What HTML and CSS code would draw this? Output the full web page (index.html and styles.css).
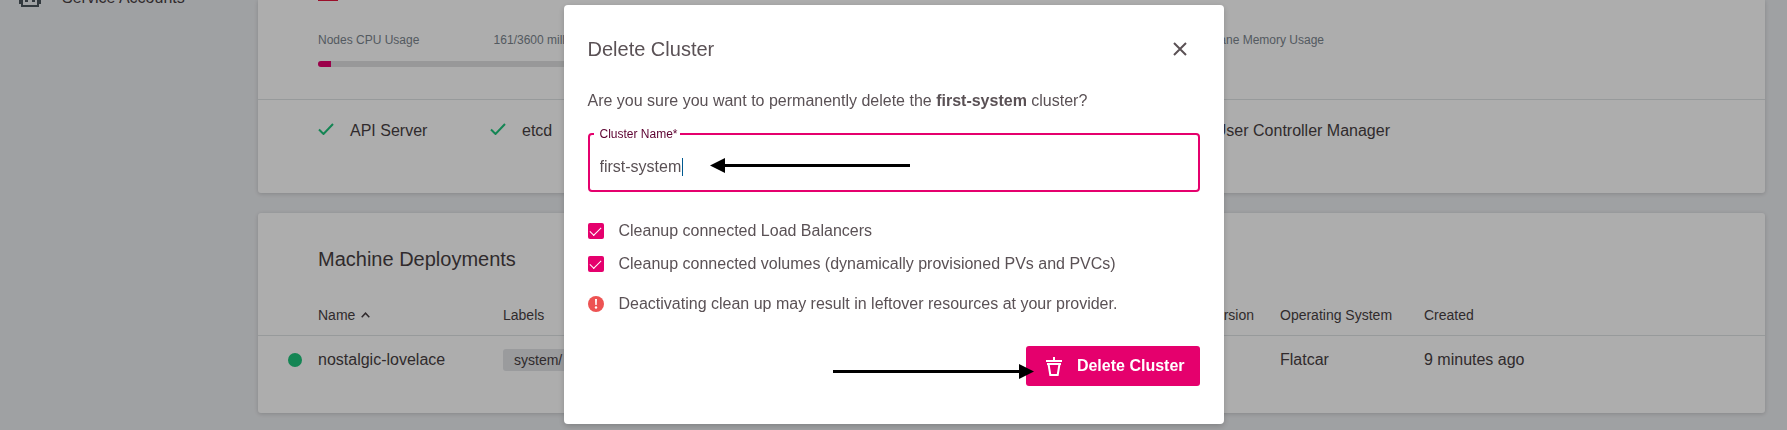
FILE: index.html
```html
<!DOCTYPE html>
<html lang="en">
<head>
<meta charset="utf-8">
<title>Delete Cluster</title>
<link rel="stylesheet" href="styles.css">
</head>
<body>
<div class="shell">
  <nav class="sidebar">
    <a class="nav-item" href="#">
      <svg class="nav-icon" width="22" height="22" viewBox="0 0 22 22" fill="none" stroke="currentColor" stroke-width="2"><path d="M3 4h16v17H3zM1 12v7M21 12v7M11 4V0"/><path d="M6 12h3v5H6zM13 12h3v5h-3z" fill="currentColor" stroke="none"/></svg>
      <span>Service Accounts</span>
    </a>
  </nav>
  <main class="content">
    <section class="card cluster">
      <div class="provider"><span class="provider-logo"></span></div>
      <div class="usage">
        <div class="meter">
          <div class="meter-head"><span>Nodes CPU Usage</span><span>161/3600 millicores</span></div>
          <div class="track"><div class="fill" style="width:4.7%"></div></div>
        </div>
        <div class="memory">
          <div class="memory-label">Control Plane Memory Usage</div>
          <div class="memory-value">1 GB</div>
        </div>
      </div>
      <div class="health">
        <div class="health-item"><svg width="16" height="12" viewBox="0 0 16 12"><path d="M1 6.500l4.500 4.500L15 1"/></svg>API Server</div>
        <div class="health-item"><svg width="16" height="12" viewBox="0 0 16 12"><path d="M1 6.500l4.500 4.500L15 1"/></svg>etcd</div>
        <div class="health-item last"><svg width="16" height="12" viewBox="0 0 16 12"><path d="M1 6.500l4.500 4.500L15 1"/></svg>User Controller Manager</div>
      </div>
    </section>
    <section class="card deployments">
      <h2>Machine Deployments</h2>
      <table>
        <colgroup><col class="c-status"><col class="c-name"><col class="c-labels"><col class="c-version"><col class="c-os"><col></colgroup>
        <thead>
          <tr><th></th><th>Name <svg width="9" height="6" viewBox="0 0 9 6"><path d="M.7 5.300L4.500 1.200l3.800 4.100"/></svg></th><th>Labels</th><th class="right">Version</th><th>Operating System</th><th>Created</th></tr>
        </thead>
        <tbody>
          <tr><td class="status"><span class="dot"></span></td><td>nostalgic-lovelace</td><td><span class="chip">system/</span></td><td></td><td>Flatcar</td><td>9 minutes ago</td></tr>
        </tbody>
      </table>
    </section>
  </main>
</div>

<div class="backdrop">
  <form class="dialog" role="dialog" aria-labelledby="dialog-title">
    <header class="dialog-head">
      <h1 id="dialog-title">Delete Cluster</h1>
      <button class="close" type="button" aria-label="Close"><svg width="14" height="14" viewBox="0 0 14 14"><path d="M1 1l12 12M13 1L1 13"/></svg></button>
    </header>
    <p class="question">Are you sure you want to permanently delete the <strong>first-system</strong> cluster?</p>
    <fieldset class="field">
      <legend><label for="cluster-name">Cluster Name*</label></legend>
      <div class="field-row"><input id="cluster-name" type="text" value="first-system"><span class="caret"></span></div>
    </fieldset>
    <label class="check"><input type="checkbox" checked>Cleanup connected Load Balancers</label>
    <label class="check"><input type="checkbox" checked>Cleanup connected volumes (dynamically provisioned PVs and PVCs)</label>
    <p class="warning"><svg width="16" height="16" viewBox="0 0 16 16"><circle cx="8" cy="8" r="8" fill="#ed5353"/><path d="M7 3h2l-.3 6H7.300z" fill="#fff"/><circle cx="8" cy="11.500" r="1.200" fill="#fff"/></svg>Deactivating clean up may result in leftover resources at your provider.</p>
    <footer class="actions">
      <button class="delete" type="submit"><svg width="16" height="19" viewBox="0 0 16 19" fill="none" stroke="#fff" stroke-width="2"><path d="M8 0v4M0 4h16M1 7h14M2.500 7l1.800 11h7.400l1.800-11"/></svg>Delete Cluster</button>
    </footer>
    <svg class="arrow arrow-field" width="200" height="15" viewBox="0 0 200 15"><path d="M0 7.500L15 0v15z"/><path d="M14 6h186v3H14z"/></svg>
    <svg class="arrow arrow-button" width="201" height="15" viewBox="0 0 201 15"><path d="M201 7.500L186 0v15z"/><path d="M0 6h187v3H0z"/></svg>
  </form>
</div>
</body>
</html>
```
FILE: styles.css
```css
* { box-sizing: border-box; }
body {
  margin: 0;
  overflow: hidden;
  background: #ebedf0;
  color: #5a5155;
  font: 16px/20px "Liberation Sans", Arial, sans-serif;
}
h1, h2, p { margin: 0; font-weight: 400; }
.shell { display: flex; height: 100vh; overflow: hidden; }
.sidebar { flex: 0 0 258px; padding-left: 19px; }
.nav-item {
  display: flex;
  align-items: flex-end;
  gap: 21px;
  height: 8px;
  color: #483f43;
  text-decoration: none;
}
.nav-icon { flex: none; margin-bottom: 1px; color: #4b545c; }
.content {
  display: flex;
  flex: 1;
  flex-direction: column;
  gap: 20px;
  padding-right: 22px;
}
.card {
  flex: none;
  overflow: hidden;
  background: #fff;
  border-radius: 3px;
  box-shadow: 0 1px 4px rgba(0, 0, 0, .16);
}
.cluster { border-radius: 0 0 3px 3px; }
.provider { padding-left: 60px; height: 30px; }
.provider-logo { display: block; width: 20px; height: 1px; background: #e5173f; }
.usage {
  display: flex;
  justify-content: space-between;
  padding: 0 441px 0 60px;
  height: 70px;
  border-bottom: 1px solid #dfe3e5;
}
.meter { width: 279px; font-size: 12px; color: #7b858e; }
.meter-head { display: flex; justify-content: space-between; }
.track { height: 6px; margin-top: 11px; overflow: hidden; border-radius: 3px; background: #e0e1e2; }
.fill { height: 100%; background: #e5006d; }
.memory-label { font-size: 12px; color: #7b858e; }
.memory-value { padding-left: 20px; line-height: 24px; color: #483f43; }
.health { display: flex; height: 93px; padding: 21px 375px 0 60px; color: #483f43; }
.health-item { display: flex; align-items: flex-start; gap: 16px; flex: 0 0 172px; white-space: nowrap; }
.health-item svg { margin-top: 2px; fill: none; stroke: #1ec47c; stroke-width: 2; }
.health-item.last { flex: none; margin-left: auto; }
.deployments { height: 200px; color: #483f43; }
h2 { padding: 34px 60px 0; font-size: 20px; line-height: 24px; }
table { width: 100%; margin-top: 27px; border-collapse: collapse; table-layout: fixed; }
.c-status { width: 60px; }
.c-name { width: 185px; }
.c-labels { width: 552px; }
.c-version { width: 225px; }
.c-os { width: 144px; }
th, td { padding: 0; text-align: left; white-space: nowrap; }
th { height: 37px; padding-bottom: 3px; border-bottom: 1px solid #dfe3e5; font-size: 14px; font-weight: 400; }
th svg { margin-left: 2px; vertical-align: 2px; fill: none; stroke: currentColor; stroke-width: 1.5; }
th.right { padding-right: 26px; text-align: right; }
td { height: 50px; }
.status { padding-left: 30px; }
.dot { display: block; width: 14px; height: 14px; border-radius: 50%; background: #1ec47c; }
.chip { display: inline-block; min-width: 120px; padding: 0 11px; border-radius: 3px; background: #e3e5e8; font-size: 14px; line-height: 22px; }
.backdrop {
  position: fixed;
  inset: 0;
  display: flex;
  align-items: flex-start;
  justify-content: center;
  padding-top: 5px;
  background: rgba(0, 0, 0, .32);
}
.dialog {
  position: relative;
  width: 660px;
  padding: 32px 24px 38px;
  border-radius: 4px;
  background: #fff;
  box-shadow: 0 2px 6px rgba(0, 0, 0, .2);
}
.dialog-head { display: flex; align-items: center; justify-content: space-between; }
h1 { font-size: 20px; line-height: 24px; }
.close { display: flex; padding: 5px 13px; border: 0; background: none; }
.close svg { fill: none; stroke: #5a5155; stroke-width: 2; }
.question { margin-top: 30px; }
.field { min-width: 0; margin: 16px 0 0; padding: 0 10px; border: 2px solid #e5006d; border-radius: 4px; }
legend { margin-left: -6px; padding: 0 2px 0 6px; color: #5c0030; font-size: 12px; line-height: 14px; }
.field-row { display: flex; align-items: center; gap: 1px; padding: 16px 0 13px; }
.field input { field-sizing: content; padding: 0; border: 0; outline: 0; background: none; color: inherit; font: inherit; }
.caret { width: 1px; height: 18px; background: #00598f; }
.check { display: flex; align-items: center; gap: 15px; margin-top: 13px; }
.field + .check { margin-top: 29px; }
.check input {
  width: 16px;
  height: 16px;
  margin: 0;
  appearance: none;
  border-radius: 2px;
  background: #e5006d;
  display: grid;
  place-items: center;
}
.check input::before {
  content: "";
  width: 10px;
  height: 5px;
  margin-top: -3px;
  border: solid #fff;
  border-width: 0 0 1px 1px;
  rotate: -45deg;
}
.warning { display: flex; align-items: center; gap: 15px; margin-top: 20px; }
.actions { display: flex; justify-content: flex-end; margin-top: 32px; }
.delete {
  display: flex;
  align-items: center;
  gap: 15px;
  height: 40px;
  padding: 0 15px 0 20px;
  border: 0;
  border-radius: 3px;
  background: #e5006d;
  color: #fff;
  font: 700 16px/20px "Liberation Sans", Arial, sans-serif;
}
.arrow { position: absolute; fill: #000; }
.arrow-field { left: 146px; top: 153px; }
.arrow-button { right: 190px; top: 359px; }
```
